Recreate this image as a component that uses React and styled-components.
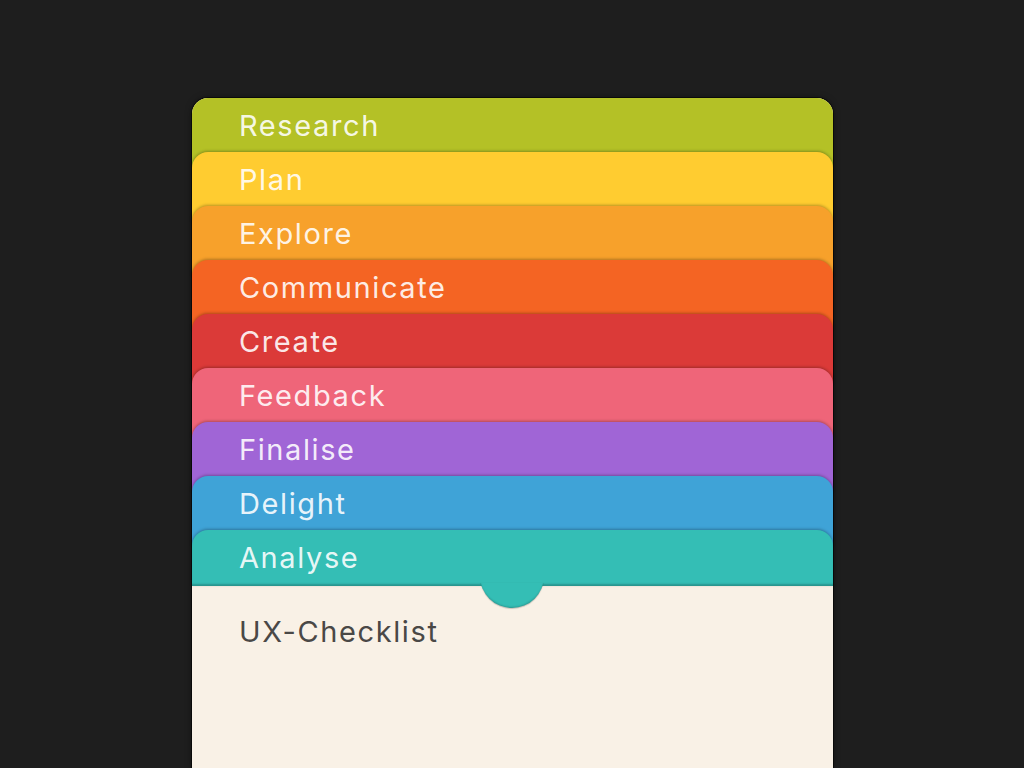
import styled, { createGlobalStyle } from "styled-components";

const phases = [
    { name: "Research", color: "#B4C126" },
    { name: "Plan", color: "#FFCC30" },
    { name: "Explore", color: "#F7A12B" },
    { name: "Communicate", color: "#F46423" },
    { name: "Create", color: "#DB3A38" },
    { name: "Feedback", color: "#EF6579" },
    { name: "Finalise", color: "#A065D6" },
    { name: "Delight", color: "#3FA3D7" },
    { name: "Analyse", color: "#34BEB5" },
];

export default function App() {
    const last = phases.length - 1;
    return (
        <Page>
            <Global />
            <Card>
                {phases.map((p, i) => (
                    <Tab key={p.name} color={p.color} $first={i === 0} $last={i === last}>
                        <Label>{p.name}</Label>
                        {i === last && <Notch color={p.color} />}
                    </Tab>
                ))}
                <Body>
                    <Title>UX-Checklist</Title>
                </Body>
            </Card>
        </Page>
    );
}

const Global = createGlobalStyle`
html, body {
    margin: 0;
    padding: 0;
    background: #1E1E1E;
    overflow: hidden;
}
`

const Page = styled.div`
width: 1024px;
height: 768px;
overflow: hidden;
display: flex;
justify-content: center;
padding-top: 98px;
box-sizing: border-box;
font-family: 'Inter', 'Open Sans', sans-serif;
`

const Card = styled.div`
width: 641px;
height: 670px;
margin-left: 1px;
display: flex;
flex-direction: column;
border-radius: 16px 16px 0 0;
background: #F9F1E6;
box-shadow: 0 0 0 1px rgba(0,0,0,0.55), 0 0 6px rgba(0,0,0,0.5);
flex-shrink: 0;
`

const Tab = styled.div`
position: relative;
flex-shrink: 0;
height: ${p => p.$last ? 56 : 70}px;
margin-top: ${p => p.$first ? 0 : -16}px;
background: ${p => p.color};
border-radius: 16px 16px 0 0;
box-shadow: ${p => p.$first ? "none" : "0 -1px 3px rgba(0,0,0,0.28)"}${p => p.$last ? ", inset 0 -3px 2px -1px rgba(0,0,0,0.22)" : ""};
display: flex;
align-items: flex-start;
padding-left: 47px;
box-sizing: border-box;
z-index: ${p => p.$last ? 2 : 1};
`

const Notch = styled.div`
position: absolute;
left: 288px;
top: 14px;
width: 64px;
height: 64px;
border-radius: 50%;
background: ${p => p.color};
box-shadow: 0 1px 1px rgba(0,0,0,0.2), inset 0 -2px 2px -1px rgba(0,0,0,0.2);
clip-path: inset(39px -4px -4px -4px);
`

const Label = styled.span`
margin-top: 10px;
font-size: 29px;
line-height: 36px;
font-weight: 400;
letter-spacing: 1.6px;
color: rgba(255,255,255,0.9);
`

const Body = styled.div`
flex: 1;
padding: 28px 0 0 47px;
`

const Title = styled.div`
font-size: 29px;
line-height: 36px;
font-weight: 400;
letter-spacing: 1.6px;
color: #4A4846;
`
